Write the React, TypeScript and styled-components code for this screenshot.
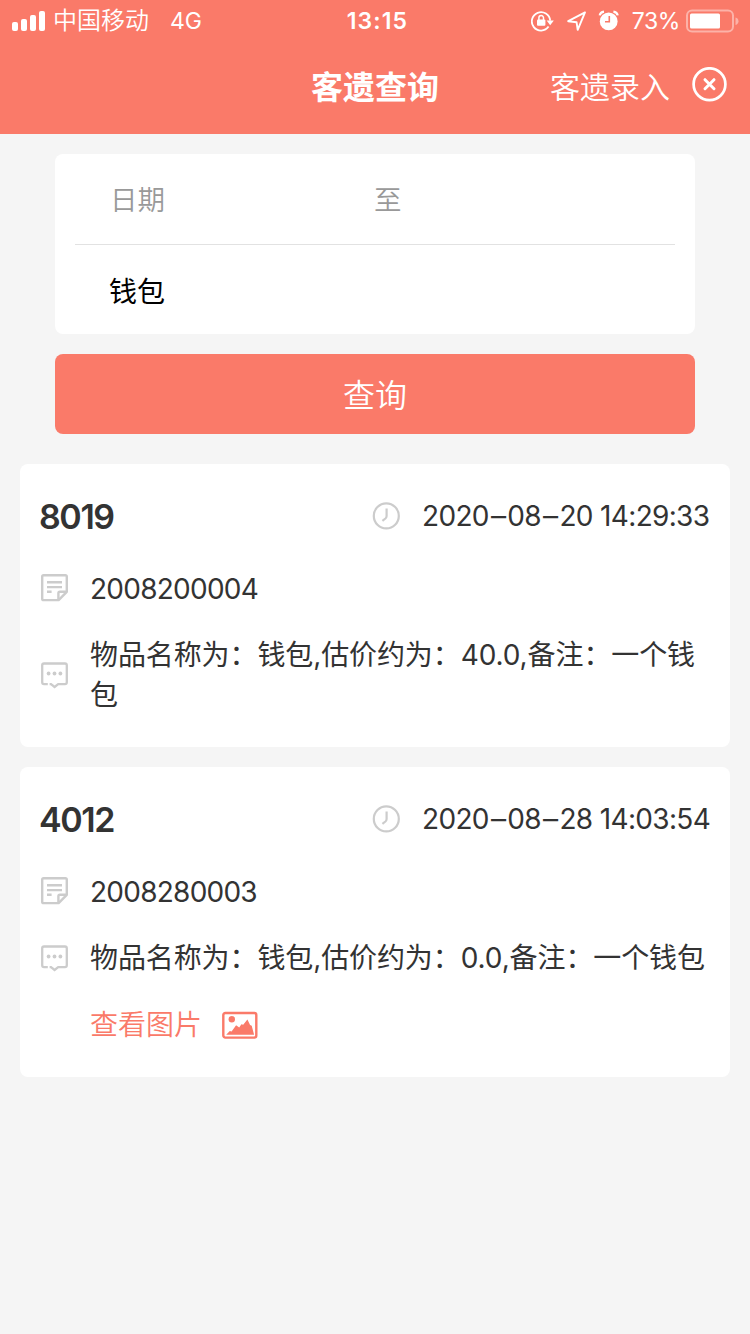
import React from "react";
import styled, { createGlobalStyle, css } from "styled-components";

const coral = "#fa7a69";

const GlobalStyle = createGlobalStyle`
  * { box-sizing: border-box; }
  body {
    margin: 0;
    background: #f5f5f5;
    font-family: Inter, "Noto Sans CJK SC", sans-serif;
    color: #333;
  }
`;

const Page = styled.div`
  min-height: 1334px;
  width: 750px;
  display: flex;
  flex-direction: column;
  background: #f5f5f5;
`;

const Header = styled.header`
  height: 134px;
  background: ${coral};
  color: #fff;
`;

const StatusBar = styled.div`
  height: 40px;
  display: grid;
  grid-template-columns: 1fr auto 1fr;
  align-items: center;
  padding: 0 11px 0 12px;
  font-size: 23px;
  line-height: 40px;
`;

const StatusGroup = styled.div<{ $end?: boolean }>`
  display: flex;
  align-items: center;
  height: 40px;
  ${(p) => p.$end && css`justify-content: flex-end;`}
`;

const Carrier = styled.span`
  margin-left: 8px;
  padding-top: 1px;
  font-size: 24px;
  font-weight: 350;
`;

const Network = styled.span`
  margin-left: 21px;
  padding-top: 1px;
  font-size: 23px;
  font-weight: 370;
`;

const Clock = styled.span`
  font-weight: 600;
  font-size: 23px;
  letter-spacing: 1.1px;
  padding: 1px 0 0 4px;
`;

const Percent = styled.span`
  margin: 0 6px 0 11px;
  padding-top: 1px;
  font-weight: 370;
  letter-spacing: -0.4px;
`;

const NavBar = styled.div`
  height: 94px;
  display: grid;
  grid-template-columns: 1fr auto 1fr;
  align-items: center;
  padding: 0 23px;
`;

const NavTitle = styled.h1`
  grid-column: 2;
  margin: 0;
  padding-top: 2px;
  font-size: 32px;
  line-height: 48px;
  font-weight: 600;
`;

const NavActions = styled.div`
  display: flex;
  align-items: center;
  justify-content: flex-end;
  gap: 22px;
`;

const NavLink = styled.span`
  font-size: 30px;
  line-height: 48px;
  font-weight: 350;
`;

const CloseIcon = styled.svg`
  display: block;
  margin-bottom: 6px;
`;

const SearchForm = styled.form`
  padding: 20px 55px 30px;
  display: flex;
  flex-direction: column;
  gap: 20px;
`;

const FieldPanel = styled.div`
  height: 180px;
  padding: 0 20px;
  border-radius: 8px;
  background: #fff;
`;

const DateField = styled.div`
  height: 91px;
  padding: 0 35px 3px;
  display: grid;
  grid-template-columns: 264px 1fr;
  align-items: center;
  border-bottom: 1px solid #e2e2e2;
  color: #999;
  font-size: 27.5px;
  font-weight: 350;
`;

const KeywordField = styled.div`
  height: 89px;
  padding: 0 34px;
  display: flex;
  align-items: center;
  color: #000;
  font-size: 28px;
`;

const SearchButton = styled.button`
  height: 80px;
  padding: 4px 0 0;
  border: 0;
  border-radius: 8px;
  background: ${coral};
  color: #fff;
  font: 350 32px/48px Inter, "Noto Sans CJK SC", sans-serif;
`;

const RecordList = styled.main`
  padding: 0 20px;
  display: flex;
  flex-direction: column;
  gap: 20px;
`;

const RecordCard = styled.article`
  padding: 29px 20px 32px;
  display: flex;
  flex-direction: column;
  gap: 27px;
  border-radius: 8px;
  background: #fff;
  font-size: 28px;
  line-height: 40px;
`;

const RecordHead = styled.div`
  height: 48px;
  display: flex;
  align-items: center;
  justify-content: space-between;
`;

const RecordTitle = styled.h2`
  margin: 0 0 0 -1px;
  font-size: 34px;
  line-height: 48px;
  font-weight: 600;
  letter-spacing: -1.4px;
`;

const RecordTime = styled.div`
  display: flex;
  align-items: center;
  padding-bottom: 3px;
`;

const TimeText = styled.time`
  width: 288px;
  margin-left: 22px;
  white-space: nowrap;
  font-weight: 370;
  letter-spacing: -0.67px;
`;

const Dash = styled.span`
  display: inline-block;
  width: 18.5px;
  text-align: center;
  transform: scaleX(1.08);
`;

const RecordRow = styled.div`
  display: grid;
  grid-template-columns: 28px 1fr;
  column-gap: 22px;
  align-items: center;
`;

const Description = styled.div`
  margin-right: -2px;
  font-weight: 370;
  letter-spacing: -0.1px;
`;

const Code = styled.span`
  padding-top: 1px;
  margin-bottom: -1px;
  font-weight: 370;
  letter-spacing: -0.75px;
`;

const PictureLink = styled.a`
  grid-column: 2;
  height: 40px;
  display: flex;
  align-items: center;
  gap: 20px;
  color: ${coral};
  font-weight: 350;
`;

const SignalIcon = () => (
  <svg width="33" height="20" viewBox="0 0 33 20" fill="#fff">
    <rect x="0" y="11" width="6" height="9" rx="2" />
    <rect x="9" y="8" width="6" height="12" rx="2" />
    <rect x="18" y="4" width="6" height="16" rx="2" />
    <rect x="27" y="0" width="6" height="20" rx="2" />
  </svg>
);

const StatusIcons = () => (
  <svg width="90" height="22" viewBox="0 0 90 22" fill="none" stroke="#fff">
    <path d="M17.6 16.6A9.2 9.2 0 1 1 19.2 10.6" strokeWidth="1.8" />
    <path d="M15.6 10.4h7.2l-3.6 4.8z" fill="#fff" stroke="none" />
    <rect x="6" y="9.4" width="8.4" height="6.4" rx="1" fill="#fff" stroke="none" />
    <path d="M7.9 10V7.8a2.3 2.3 0 0 1 4.6 0V10" strokeWidth="1.5" />
    <path d="M54 2.4 37.2 11.2l8.4 1.1 1.1 7.6z" strokeWidth="1.9" strokeLinejoin="round" />
    <circle cx="77.7" cy="11.4" r="8.9" fill="#fff" stroke="none" />
    <path d="M78.3 5.9v5.9h-4.3" stroke={coral} strokeWidth="1.6" />
    <path d="M68.7 5.4q.5-3.3 4.3-3.8M86.7 5.4q-.5-3.3-4.3-3.8" strokeWidth="2.2" />
  </svg>
);

const BatteryIcon = () => (
  <svg width="53" height="24" viewBox="0 0 53 24">
    <rect x="1" y="1.5" width="46" height="21" rx="5" fill="none" stroke="#fff" strokeOpacity=".42" strokeWidth="2" />
    <rect x="4" y="4.5" width="30" height="15" rx="1.5" fill="#fff" />
    <path d="M49.5 8.5q3 .8 3 3.7t-3 3.7z" fill="#fff" fillOpacity=".42" />
  </svg>
);

const TimeIcon = () => (
  <svg width="28" height="28" viewBox="0 0 28 28" fill="none" stroke="#ccc" strokeWidth="2.2">
    <circle cx="14.3" cy="13.9" r="12.5" />
    <path d="M14.6 6.5v7.5q0 1.4-1.2 2.5L10.4 18.8" />
  </svg>
);

const NoteIcon = () => (
  <svg width="28" height="28" viewBox="0 0 28 28" fill="none" stroke="#ccc" strokeWidth="2.4">
    <path d="M26.8 17.8V2.7q0-1.4-1.4-1.4H3.6q-1.4 0-1.4 1.4v22q0 1.4 1.4 1.4h15z" strokeLinejoin="round" />
    <path d="M18.4 25.6v-6.4q0-1.4 1.4-1.4h6.6M7 8.3h15M7 13.1h15M7 17.8h4.6" />
  </svg>
);

const MessageIcon = () => (
  <svg width="28" height="28" viewBox="0 0 28 28" fill="none" stroke="#ccc" strokeWidth="2.3">
    <path d="M7.8 23.1H4q-1.8 0-1.8-1.8v-17q0-1.8 1.8-1.8h21q1.8 0 1.8 1.8v17q0 1.8-1.8 1.8h-6.8l-3.6 2.9-3.6-2.9H9.6" />
    <g fill="#ccc" stroke="none">
      <circle cx="8.6" cy="12.5" r="1.9" />
      <circle cx="14.5" cy="12.5" r="1.9" />
      <circle cx="20.4" cy="12.5" r="1.9" />
    </g>
  </svg>
);

const PictureIcon = () => (
  <svg width="36" height="28" viewBox="0 0 36 28">
    <rect x="1.3" y="2" width="33" height="24.6" rx="2" fill="none" stroke={coral} strokeWidth="2.4" />
    <circle cx="9.8" cy="8.3" r="3.2" fill={coral} />
    <path d="M4.2 23.7l3.6-3.7 1.8.5 4.5-6.3 3.1 2.4 2.2-3.4 1.8.5 4.2-5.2 2.7 5.4 1.6.8 2.4 9z" fill={coral} />
  </svg>
);

interface LostItem {
  room: string;
  date: string[];
  time: string;
  code: string;
  detail: string;
  picture?: boolean;
}

const items: LostItem[] = [
  {
    room: "8019",
    date: ["2020", "08", "20"],
    time: "14:29:33",
    code: "2008200004",
    detail: "物品名称为：钱包,估价约为：40.0,备注：一个钱包",
  },
  {
    room: "4012",
    date: ["2020", "08", "28"],
    time: "14:03:54",
    code: "2008280003",
    detail: "物品名称为：钱包,估价约为：0.0,备注：一个钱包",
    picture: true,
  },
];

const Item = ({ item }: { item: LostItem }) => (
  <RecordCard>
    <RecordHead>
      <RecordTitle>{item.room}</RecordTitle>
      <RecordTime>
        <TimeIcon />
        <TimeText>
          {item.date[0]}
          <Dash>–</Dash>
          {item.date[1]}
          <Dash>–</Dash>
          {item.date[2]} {item.time}
        </TimeText>
      </RecordTime>
    </RecordHead>
    <RecordRow>
      <NoteIcon />
      <Code>{item.code}</Code>
    </RecordRow>
    <RecordRow>
      <MessageIcon />
      <Description>{item.detail}</Description>
    </RecordRow>
    {item.picture && (
      <RecordRow>
        <PictureLink>
          查看图片
          <PictureIcon />
        </PictureLink>
      </RecordRow>
    )}
  </RecordCard>
);

export default function App() {
  return (
    <Page>
      <GlobalStyle />
      <Header>
        <StatusBar>
          <StatusGroup>
            <SignalIcon />
            <Carrier>中国移动</Carrier>
            <Network>4G</Network>
          </StatusGroup>
          <Clock>13:15</Clock>
          <StatusGroup $end>
            <StatusIcons />
            <Percent>73%</Percent>
            <BatteryIcon />
          </StatusGroup>
        </StatusBar>
        <NavBar>
          <NavTitle>客遗查询</NavTitle>
          <NavActions>
            <NavLink>客遗录入</NavLink>
            <CloseIcon width="35" height="35" viewBox="0 0 35 35" fill="none" stroke="#fff">
              <circle cx="17.5" cy="17.2" r="15.9" strokeWidth="2.7" />
              <path d="M13 12.7l9 9M22 12.7l-9 9" strokeWidth="3" strokeLinecap="round" />
            </CloseIcon>
          </NavActions>
        </NavBar>
      </Header>
      <SearchForm>
        <FieldPanel>
          <DateField>
            <span>日期</span>
            <span>至</span>
          </DateField>
          <KeywordField>钱包</KeywordField>
        </FieldPanel>
        <SearchButton type="button">查询</SearchButton>
      </SearchForm>
      <RecordList>
        {items.map((item) => (
          <Item key={item.code} item={item} />
        ))}
      </RecordList>
    </Page>
  );
}
